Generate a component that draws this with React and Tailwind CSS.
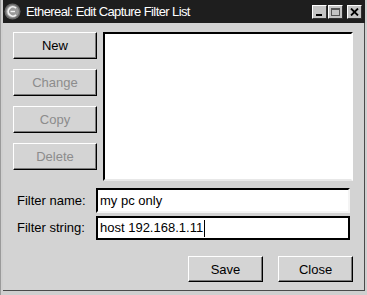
import React from 'react';

const face = "font-['Liberation_Sans',Arial,sans-serif]";

function WinButton({ label, disabled, className = 'h-[27px]' }) {
  return (
    <button
      className={`bg-[#d4d4d4] border border-t-white border-l-white border-r-black border-b-black shadow-[inset_-1px_-1px_0_#7a7a7a] text-[13px] leading-none ${
        disabled ? 'text-[#8c8c8c]' : 'text-black'
      } ${className}`}
    >
      {label}
    </button>
  );
}

function TitleButton({ children }) {
  return (
    <div className="w-[15px] h-[14px] bg-[#c4c4c4] border border-t-white border-l-white border-r-[#303030] border-b-[#303030] flex items-center justify-center">
      {children}
    </div>
  );
}

function Logo() {
  return (
    <svg width="17" height="17" viewBox="0 0 17 17">
      <circle cx="8.5" cy="8.5" r="8" fill="#6a6a6a" />
      <circle cx="8.5" cy="8.5" r="6.5" fill="#9a9a9a" />
      <path d="M12 5.2 A4.6 4.6 0 1 0 12 11.8" fill="none" stroke="#f2f2f2" strokeWidth="1.8" />
      <path d="M6.5 8.5 L11 8.5" stroke="#f2f2f2" strokeWidth="1.4" />
    </svg>
  );
}

export default function App() {
  return (
    <div className={`w-[367px] h-[295px] bg-[#cfcfcf] border-l border-l-[#9a9a9a] pl-[2px] pr-[2px] pb-[4px] flex flex-col ${face}`}>
      {/* title bar */}
      <div className="h-[23px] bg-[#1e1e1e] flex items-center pl-[1px] pr-[3px]">
        <Logo />
        <span className="ml-[5px] text-white text-[13px] tracking-[-0.6px] leading-none">Ethereal: Edit Capture Filter List</span>
        <div className="ml-auto flex items-center">
          <TitleButton>
            <div className="w-[6px] h-[2px] bg-black mt-[7px] mr-[2px]" />
          </TitleButton>
          <div className="w-[1px]" />
          <TitleButton>
            <div className="w-[9px] h-[8px] border border-[#555] border-t-2 border-t-[#555]" />
          </TitleButton>
          <div className="w-[4px]" />
          <TitleButton>
            <svg width="9" height="8" viewBox="0 0 9 8">
              <path d="M1 0.5 L8 7.5 M8 0.5 L1 7.5" stroke="black" strokeWidth="1.8" />
            </svg>
          </TitleButton>
        </div>
      </div>

      {/* client area */}
      <div className="flex-1 bg-[#d3d3d3] border-r border-b border-[#4a4a4a] pl-[10px] pr-[11px] pt-[9px] flex flex-col">
        <div className="flex gap-[6px]">
          <div className="w-[84px] flex flex-col gap-[10px]">
            <WinButton label="New" />
            <WinButton label="Change" disabled />
            <WinButton label="Copy" disabled />
            <WinButton label="Delete" disabled />
          </div>
          <div className="w-[250px] h-[149px] bg-white border-2 border-t-black border-l-black border-r-white border-b-[#e8e8e8]" />
        </div>

        <div className="mt-[7px] flex flex-col gap-[3px]">
          <div className="flex items-center">
            <span className="w-[83px] pl-[4px] text-[13px] text-black">Filter name:</span>
            <div className="w-[254px] h-[25px] bg-white border-2 border-t-black border-l-black border-r-[#f4f4f4] border-b-[#f4f4f4] flex items-center pl-[2px] text-[13px] text-black">
              my pc only
            </div>
          </div>
          <div className="flex items-center">
            <span className="w-[83px] pl-[4px] text-[13px] text-black">Filter string:</span>
            <div className="w-[254px] h-[24px] bg-white border-2 border-black flex items-center pl-[2px] text-[13px] text-black">
              host 192.168.1.11
              <span className="w-[1px] h-[17px] bg-black ml-[1px]" />
            </div>
          </div>
        </div>

        <div className="mt-[16px] flex justify-end gap-[15px]">
          <WinButton label="Save" className="w-[75px] h-[26px]" />
          <WinButton label="Close" className="w-[75px] h-[26px]" />
        </div>
      </div>
    </div>
  );
}
